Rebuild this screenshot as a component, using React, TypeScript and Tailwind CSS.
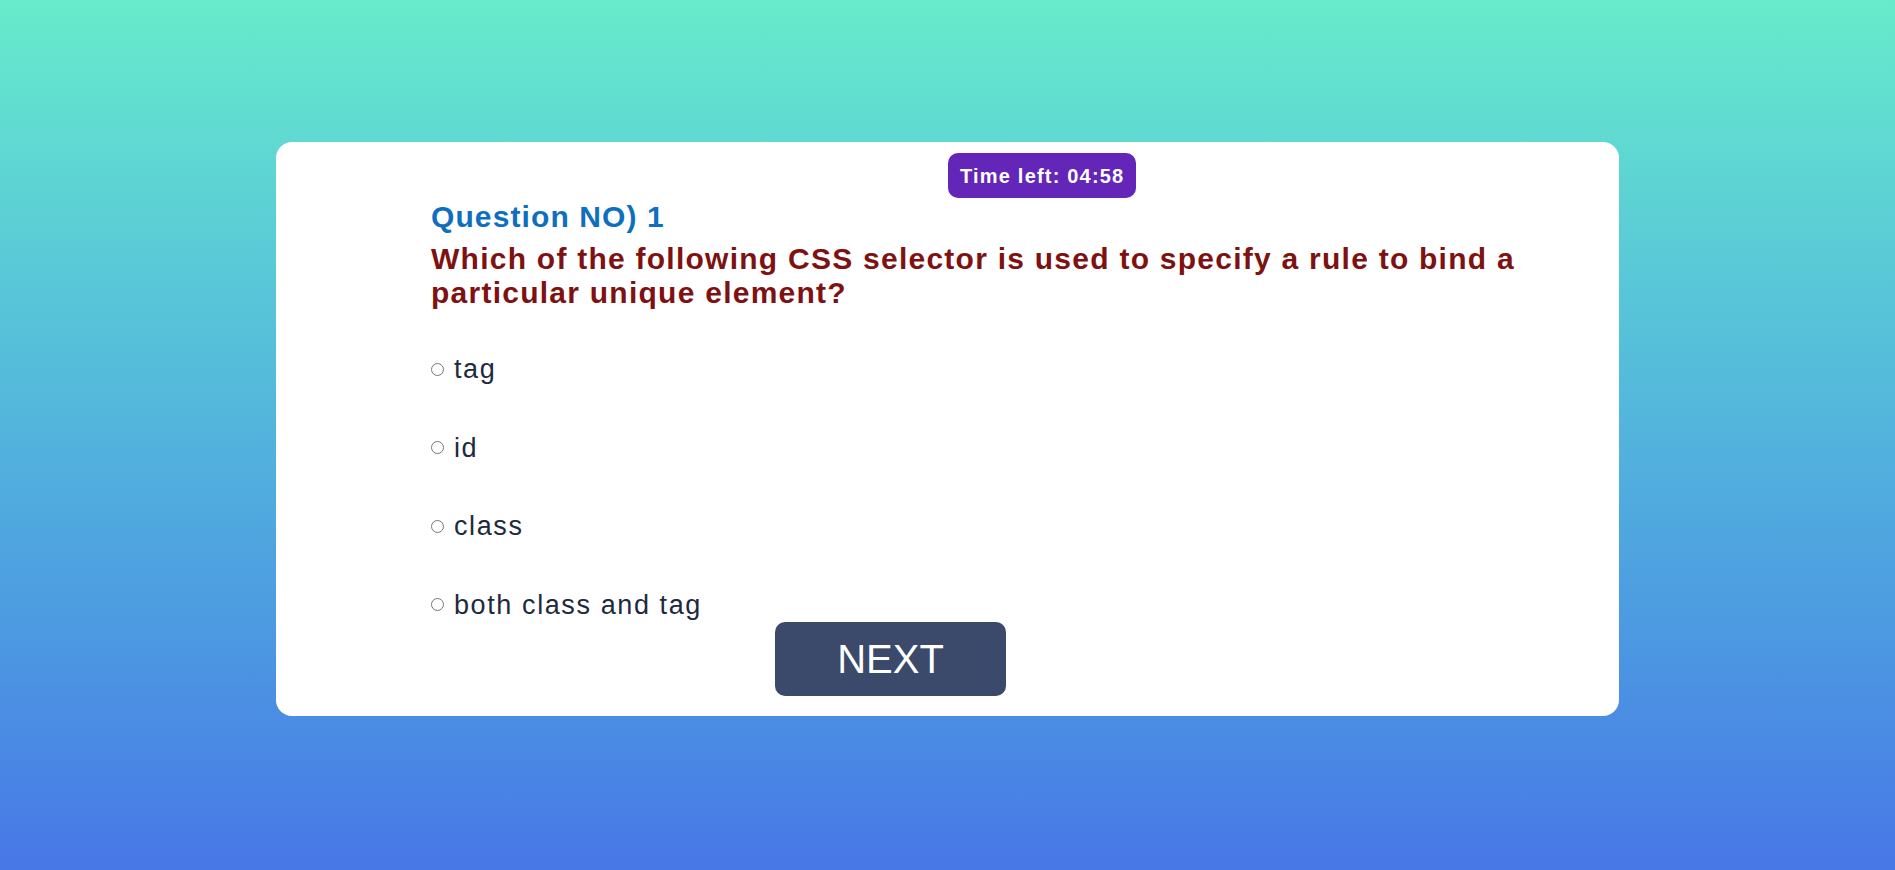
import { useState } from "react";

const options = ["tag", "id", "class", "both class and tag"];

export default function App() {
  const [selected, setSelected] = useState<string | null>(null);

  return (
    <div className="min-h-[870px] w-full bg-gradient-to-b from-[#67ebcb] to-[#4877e6] flex justify-center pt-[142px] font-['Liberation_Sans',Arial,sans-serif]">
      <div className="w-[1343px] h-[574px] bg-white rounded-[16px] pl-[155px] pt-[11px]">
        <div className="pl-[517px]">
          <div className="inline-flex items-center h-[45px] px-[12px] rounded-[10px] bg-[#6326b9] text-white font-bold text-[20px] tracking-[1.2px]">
            Time left: 04:58
          </div>
        </div>
        <h2 className="mt-[3px] text-[30px] font-bold text-[#0f6fbf] tracking-[1.1px] leading-[32px]">
          Question NO) 1
        </h2>
        <p className="mt-[9px] text-[30px] font-bold text-[#7e1212] tracking-[1.25px] leading-[34px] w-[1120px]">
          Which of the following CSS selector is used to specify a rule to bind
          a particular unique element?
        </p>
        <div className="mt-[44px] flex flex-col gap-[48.5px]">
          {options.map((opt) => (
            <label
              key={opt}
              className="flex items-center gap-[10px] text-[27px] text-[#1e2a40] tracking-[1.6px] leading-[30px] cursor-pointer"
            >
              <input
                type="radio"
                name="answer"
                checked={selected === opt}
                onChange={() => setSelected(opt)}
                className="w-[13px] h-[13px]"
              />
              {opt}
            </label>
          ))}
        </div>
        <div className="pl-[344px] mt-[2px]">
          <button className="w-[231px] h-[74px] rounded-[10px] bg-[#3b4a6b] text-white text-[40px]">
            NEXT
          </button>
        </div>
      </div>
    </div>
  );
}
